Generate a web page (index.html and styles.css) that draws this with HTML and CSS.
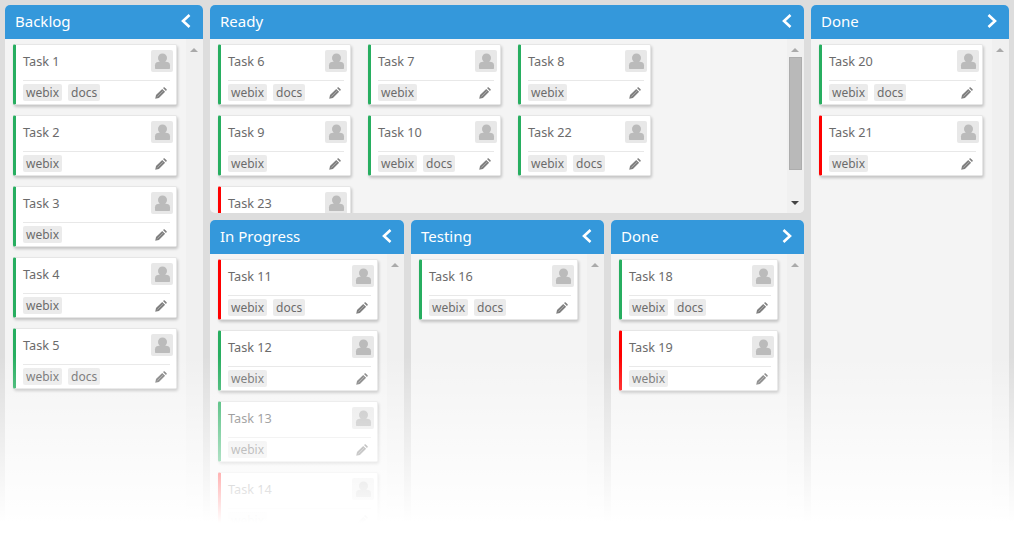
FILE: index.html
```html
<!DOCTYPE html>
<html lang="en">
<head>
  <meta charset="UTF-8" />
  <title>Kanban board</title>
  <link rel="stylesheet" href="styles.css">
</head>
<body>
  <svg class="sprites" width="0" height="0">
    <symbol id="user" viewBox="0 0 22 22">
      <circle cx="11.500" cy="8" r="4.500" />
      <path d="M4 18v-2.800c0-2.400 2-3.400 4.200-3.400h6.600c2.200 0 4.200 1 4.200 3.400V18c0 .6-.4 1-1 1H5c-.6 0-1-.4-1-1z" />
    </symbol>
    <symbol id="pencil" viewBox="0 0 12 12">
      <path d="M0.200 11.800l.8-3.700 6.200-6.200 2.900 2.900-6.200 6.200z" />
      <path d="M8 1.100l.7-.7c.3-.3.700-.3 1 0l1.900 1.900c.3.300.3.700 0 1l-.7.700z" />
      <path class="pencil-shine" d="M2.400 9.600l6-6" />
    </symbol>
  </svg>

  <div class="board">
    <section class="panel">
      <header class="panel-head">Backlog <svg class="chevron" viewBox="0 0 10 14"><path d="M8.500 1L2 7l6.500 6" /></svg></header>
      <div class="panel-body">
        <div class="cards">
          <div class="card green"><div class="card-top">Task 1<svg class="avatar"><use href="#user" /></svg></div><div class="card-foot"><span class="tag">webix</span><span class="tag">docs</span><svg class="edit"><use href="#pencil" /></svg></div></div>
          <div class="card green"><div class="card-top">Task 2<svg class="avatar"><use href="#user" /></svg></div><div class="card-foot"><span class="tag">webix</span><svg class="edit"><use href="#pencil" /></svg></div></div>
          <div class="card green"><div class="card-top">Task 3<svg class="avatar"><use href="#user" /></svg></div><div class="card-foot"><span class="tag">webix</span><svg class="edit"><use href="#pencil" /></svg></div></div>
          <div class="card green"><div class="card-top">Task 4<svg class="avatar"><use href="#user" /></svg></div><div class="card-foot"><span class="tag">webix</span><svg class="edit"><use href="#pencil" /></svg></div></div>
          <div class="card green"><div class="card-top">Task 5<svg class="avatar"><use href="#user" /></svg></div><div class="card-foot"><span class="tag">webix</span><span class="tag">docs</span><svg class="edit"><use href="#pencil" /></svg></div></div>
        </div>
        <div class="scroll"><i class="arrow-up"></i></div>
      </div>
    </section>

    <div class="middle">
      <section class="panel ready">
        <header class="panel-head">Ready <svg class="chevron" viewBox="0 0 10 14"><path d="M8.500 1L2 7l6.500 6" /></svg></header>
        <div class="panel-body">
          <div class="cards wrap">
            <div class="card green"><div class="card-top">Task 6<svg class="avatar"><use href="#user" /></svg></div><div class="card-foot"><span class="tag">webix</span><span class="tag">docs</span><svg class="edit"><use href="#pencil" /></svg></div></div>
            <div class="card green"><div class="card-top">Task 7<svg class="avatar"><use href="#user" /></svg></div><div class="card-foot"><span class="tag">webix</span><svg class="edit"><use href="#pencil" /></svg></div></div>
            <div class="card green"><div class="card-top">Task 8<svg class="avatar"><use href="#user" /></svg></div><div class="card-foot"><span class="tag">webix</span><svg class="edit"><use href="#pencil" /></svg></div></div>
            <div class="card green"><div class="card-top">Task 9<svg class="avatar"><use href="#user" /></svg></div><div class="card-foot"><span class="tag">webix</span><svg class="edit"><use href="#pencil" /></svg></div></div>
            <div class="card green"><div class="card-top">Task 10<svg class="avatar"><use href="#user" /></svg></div><div class="card-foot"><span class="tag">webix</span><span class="tag">docs</span><svg class="edit"><use href="#pencil" /></svg></div></div>
            <div class="card green"><div class="card-top">Task 22<svg class="avatar"><use href="#user" /></svg></div><div class="card-foot"><span class="tag">webix</span><span class="tag">docs</span><svg class="edit"><use href="#pencil" /></svg></div></div>
            <div class="card red"><div class="card-top">Task 23<svg class="avatar"><use href="#user" /></svg></div></div>
          </div>
          <div class="scroll"><i class="arrow-up"></i><b class="thumb"></b><i class="arrow-down"></i></div>
        </div>
      </section>

      <div class="lower">
        <section class="panel">
          <header class="panel-head">In Progress <svg class="chevron" viewBox="0 0 10 14"><path d="M8.500 1L2 7l6.500 6" /></svg></header>
          <div class="panel-body">
            <div class="cards">
              <div class="card red"><div class="card-top">Task 11<svg class="avatar"><use href="#user" /></svg></div><div class="card-foot"><span class="tag">webix</span><span class="tag">docs</span><svg class="edit"><use href="#pencil" /></svg></div></div>
              <div class="card green"><div class="card-top">Task 12<svg class="avatar"><use href="#user" /></svg></div><div class="card-foot"><span class="tag">webix</span><svg class="edit"><use href="#pencil" /></svg></div></div>
              <div class="card green"><div class="card-top">Task 13<svg class="avatar"><use href="#user" /></svg></div><div class="card-foot"><span class="tag">webix</span><svg class="edit"><use href="#pencil" /></svg></div></div>
              <div class="card red"><div class="card-top">Task 14<svg class="avatar"><use href="#user" /></svg></div><div class="card-foot"><span class="tag">webix</span><svg class="edit"><use href="#pencil" /></svg></div></div>
            </div>
            <div class="scroll"><i class="arrow-up"></i></div>
          </div>
        </section>
        <section class="panel">
          <header class="panel-head">Testing <svg class="chevron" viewBox="0 0 10 14"><path d="M8.500 1L2 7l6.500 6" /></svg></header>
          <div class="panel-body">
            <div class="cards">
              <div class="card green"><div class="card-top">Task 16<svg class="avatar"><use href="#user" /></svg></div><div class="card-foot"><span class="tag">webix</span><span class="tag">docs</span><svg class="edit"><use href="#pencil" /></svg></div></div>
            </div>
            <div class="scroll"><i class="arrow-up"></i></div>
          </div>
        </section>
        <section class="panel">
          <header class="panel-head">Done <svg class="chevron" viewBox="0 0 10 14"><path d="M1.500 1L8 7l-6.500 6" /></svg></header>
          <div class="panel-body">
            <div class="cards">
              <div class="card green"><div class="card-top">Task 18<svg class="avatar"><use href="#user" /></svg></div><div class="card-foot"><span class="tag">webix</span><span class="tag">docs</span><svg class="edit"><use href="#pencil" /></svg></div></div>
              <div class="card red"><div class="card-top">Task 19<svg class="avatar"><use href="#user" /></svg></div><div class="card-foot"><span class="tag">webix</span><svg class="edit"><use href="#pencil" /></svg></div></div>
            </div>
            <div class="scroll"><i class="arrow-up"></i></div>
          </div>
        </section>
      </div>
    </div>

    <section class="panel">
      <header class="panel-head">Done <svg class="chevron" viewBox="0 0 10 14"><path d="M1.500 1L8 7l-6.500 6" /></svg></header>
      <div class="panel-body">
        <div class="cards">
          <div class="card green"><div class="card-top">Task 20<svg class="avatar"><use href="#user" /></svg></div><div class="card-foot"><span class="tag">webix</span><span class="tag">docs</span><svg class="edit"><use href="#pencil" /></svg></div></div>
          <div class="card red"><div class="card-top">Task 21<svg class="avatar"><use href="#user" /></svg></div><div class="card-foot"><span class="tag">webix</span><svg class="edit"><use href="#pencil" /></svg></div></div>
        </div>
        <div class="scroll"><i class="arrow-up"></i></div>
      </div>
    </section>
  </div>

  <div class="fade"></div>
</body>
</html>
```

FILE: styles.css
```css
:root {
  --bg: #dddddd;
  --panel: #f4f4f4;
  --scroll: #f0f0f0;
  --head: #3498db;
  --text: #6b6b6b;
  --green: #27ae60;
  --red: #ff0000;
}

* {
  margin: 0;
  padding: 0;
  box-sizing: border-box;
}

html, body {
  height: 539px;
  overflow: hidden;
}

body {
  background: var(--bg);
  color: var(--text);
  font-family: "Noto Sans", sans-serif;
  font-size: 12.7px;
  position: relative;
}

.sprites {
  position: absolute;
}

.board {
  display: grid;
  grid-template-columns: 198px 1fr 198px;
  gap: 7px;
  height: 100%;
  padding: 5px 5px 0;
}

.middle {
  display: grid;
  grid-template-rows: 208px 1fr;
  gap: 7px;
  min-height: 0;
}

.lower {
  display: grid;
  grid-template-columns: 194px 193px 193px;
  gap: 7px;
  min-height: 0;
}

.panel {
  display: flex;
  flex-direction: column;
  background: var(--panel);
  border-radius: 5px 5px 0 0;
  overflow: hidden;
  min-height: 0;
}

.ready {
  border-radius: 5px;
}

.panel-head {
  flex: none;
  display: flex;
  justify-content: space-between;
  align-items: center;
  height: 34px;
  padding: 0 12px 2px 10px;
  background: var(--head);
  color: #fff;
  font-size: 15px;
}

.chevron {
  width: 10px;
  height: 14px;
  fill: none;
  stroke: #fff;
  stroke-width: 2.6;
}

.panel-body {
  flex: 1;
  display: flex;
  min-height: 0;
}

.cards {
  flex: 1;
  display: flex;
  flex-direction: column;
  gap: 10px;
  padding: 5px 9px 0 8px;
  min-width: 0;
  overflow: hidden;
}

.cards.wrap {
  flex-direction: row;
  flex-wrap: wrap;
  align-content: flex-start;
  gap: 10px 17px;
}

.wrap .card {
  width: 133px;
}

.card {
  flex: none;
  height: 61px;
  padding: 0 6px 0 7px;
  background: #fff;
  border: 1px solid #e6e6e6;
  border-left: 3px solid var(--green);
  border-radius: 2px;
  box-shadow: 1px 2px 3px rgba(0, 0, 0, 0.2);
}

.card.red {
  border-left-color: var(--red);
}

.card-top {
  display: flex;
  justify-content: space-between;
  height: 35px;
  padding-top: 5px;
  line-height: 23px;
  margin-right: -3px;
}

.avatar {
  width: 22px;
  height: 22px;
  background: #e8e8e8;
  border-radius: 2px;
  fill: #bbbbbb;
}

.card-foot {
  display: flex;
  align-items: center;
  gap: 6px;
  height: 24px;
  padding-right: 3px;
  border-top: 1px solid #e8e8e8;
}

.tag {
  padding: 0 3px;
  height: 17px;
  font-size: 12px;
  line-height: 17px;
  background: #ebebeb;
  border-radius: 2px;
}

.edit {
  width: 12px;
  height: 12px;
  margin-left: auto;
  fill: #808080;
}

.pencil-shine {
  fill: none;
  stroke: #a8a8a8;
  stroke-width: 1;
}

.scroll {
  flex: none;
  position: relative;
  width: 17px;
  background: var(--scroll);
}

.arrow-up, .arrow-down {
  position: absolute;
  left: 4px;
  width: 0;
  height: 0;
  border-left: 4px solid transparent;
  border-right: 4px solid transparent;
}

.arrow-up {
  top: 9px;
  border-bottom: 4px solid #aaaaaa;
}

.arrow-down {
  bottom: 8px;
  border-top: 4px solid #444444;
}

.thumb {
  position: absolute;
  top: 18px;
  left: 2px;
  width: 13px;
  height: 113px;
  background: #b9b9b9;
  border: 1px solid #adadad;
}

.fade {
  position: absolute;
  inset: 0;
  background: linear-gradient(to bottom, rgba(255, 255, 255, 0) 66%, #fff 97%);
  pointer-events: none;
}
```
